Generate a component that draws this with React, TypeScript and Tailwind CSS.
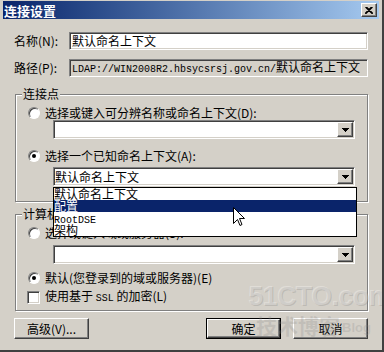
import React from 'react';

const sunken =
  'border border-t-[#808080] border-l-[#808080] border-b-white border-r-white shadow-[inset_1px_1px_0_#404040,inset_-1px_-1px_0_#d4d0c8]';
const raised =
  'border border-t-white border-l-white border-b-[#404040] border-r-[#404040] shadow-[inset_-1px_-1px_0_#808080,inset_1px_1px_0_#d4d0c8]';
const etched = 'border border-[#808080] shadow-[1px_1px_0_#fff,inset_1px_1px_0_#fff]';

function Arrow() {
  return (
    <svg width="7" height="4" viewBox="0 0 7 4">
      <rect x="0" y="0" width="7" height="1" fill="#000" />
      <rect x="1" y="1" width="5" height="1" fill="#000" />
      <rect x="2" y="2" width="3" height="1" fill="#000" />
      <rect x="3" y="3" width="1" height="1" fill="#000" />
    </svg>
  );
}

function Combo({ value, children }: { value?: string; children?: React.ReactNode }) {
  return (
    <div className={`relative ml-[37px] flex h-[19px] w-[302px] items-center bg-white ${sunken}`}>
      <span className="pl-[1px] leading-[12px]">{value}</span>
      <div className={`ml-auto mr-[1px] flex h-[15px] w-[16px] items-center justify-center bg-[#d4d0c8] ${raised}`}>
        <Arrow />
      </div>
      {children}
    </div>
  );
}

function Radio({ checked, label }: { checked?: boolean; label: string }) {
  return (
    <div className="ml-[12px] flex h-[12px] items-center">
      <div className="flex h-[12px] w-[12px] items-center justify-center rounded-full border border-t-[#808080] border-l-[#808080] border-b-white border-r-white bg-white shadow-[inset_1px_1px_0_#404040]">
        {checked && <div className="h-[4px] w-[4px] rounded-full bg-black" />}
      </div>
      <span className="ml-[5px] leading-[12px]">{label}</span>
    </div>
  );
}

function Button({ label, isDefault }: { label: string; isDefault?: boolean }) {
  const inner = (
    <div className={`flex h-full w-full items-center justify-center bg-[#d4d0c8] ${raised}`}>
      <span className="leading-[12px]">{label}</span>
    </div>
  );
  if (isDefault) {
    return <div className="h-[21px] w-[75px] border border-black">{inner}</div>;
  }
  return <div className="h-[21px] w-[75px]">{inner}</div>;
}

export default function App() {
  return (
    <div className="relative h-[352px] w-[384px] overflow-hidden border-r-2 border-b-2 border-[#404040] bg-[#d4d0c8] font-['Noto_Sans_CJK_SC',sans-serif] text-[12px] text-black">
      {/* title bar */}
      <div className="px-[3px] pt-[1px]">
        <div className="flex h-[18px] items-center bg-gradient-to-r from-[#0a246a] to-[#a6caf0] pl-[1px] pr-[2px]">
          <span className="text-[13px] font-bold leading-[13px] text-white">连接设置</span>
          <div className={`ml-auto flex h-[14px] w-[16px] items-center justify-center bg-[#d4d0c8] ${raised}`}>
            <svg width="8" height="7" viewBox="0 0 8 7">
              <path d="M0.5 0 L7.5 7 M1.5 0 L8 6.5 M7.5 0 L0.5 7 M6.5 0 L0 6.5" stroke="#000" strokeWidth="1.2" />
            </svg>
          </div>
        </div>
      </div>

      <div className="px-[14px]">
        <div className="mt-[13px] flex items-center">
          <span className="w-[55px] leading-[12px]">名称(N):</span>
          <div className={`flex h-[18px] flex-1 items-center bg-white pl-[2px] ${sunken}`}>
            <span className="leading-[12px]">默认命名上下文</span>
          </div>
        </div>
        <div className="mt-[9px] flex items-center">
          <span className="w-[55px] leading-[12px]">路径(P):</span>
          <div className={`flex h-[18px] flex-1 items-center bg-[#d4d0c8] pl-[2px] ${sunken}`}>
            <span className="whitespace-nowrap leading-[12px]">
              <span className="font-['Liberation_Mono',monospace] text-[10px]">LDAP://WIN2008R2.hbsycsrsj.gov.cn/</span>
              默认命名上下文
            </span>
          </div>
        </div>

        {/* 连接点 */}
        <div className={`relative ml-[1px] mt-[17px] h-[108px] ${etched}`}>
          <span className="absolute -top-[8px] left-[6px] bg-[#d4d0c8] px-[1px] leading-[14px]">连接点</span>
          <div className="mt-[12px]">
            <Radio label="选择或键入可分辨名称或命名上下文(D):" />
          </div>
          <div className="mt-[1px]">
            <Combo />
          </div>
          <div className="mt-[11px]">
            <Radio checked label="选择一个已知命名上下文(A):" />
          </div>
          <div className="mt-[5px]">
            <Combo value="默认命名上下文">
              <div className="absolute left-[-1px] top-[19px] z-20 flex h-[50px] w-[304px] flex-col border border-black bg-white">
                <div className="h-[12px] leading-[12px]">默认命名上下文</div>
                <div className="h-[12px] bg-[#0a246a] leading-[12px] text-white">配置</div>
                <div className="h-[12px] leading-[12px]">
                  <span className="font-['Liberation_Mono',monospace] text-[10px]">RootDSE</span>
                </div>
                <div className="h-[12px] leading-[12px]">架构</div>
              </div>
            </Combo>
          </div>
        </div>

        {/* 计算机 */}
        <div className={`relative ml-[1px] mt-[12px] h-[97px] ${etched}`}>
          <span className="absolute -top-[8px] left-[6px] bg-[#d4d0c8] px-[1px] leading-[14px]">计算机</span>
          <div className="mt-[12px]">
            <Radio label="选择或键入域或服务器(S):" />
          </div>
          <div className="mt-[6px]">
            <Combo />
          </div>
          <div className="mt-[8px]">
            <Radio checked label="默认(您登录到的域或服务器)(E)" />
          </div>
          <div className="ml-[11px] mt-[6px] flex items-center">
            <div className={`h-[13px] w-[13px] bg-white ${sunken}`} />
            <span className="ml-[5px] leading-[12px]">
              使用基于 <span className="font-['Liberation_Mono',monospace] text-[10px]">SSL</span> 的加密(L)
            </span>
          </div>
        </div>

        <div className="mt-[7px] flex items-center">
          <Button label="高级(V)..." />
          <div className="ml-auto flex gap-[12px]">
            <Button label="确定" isDefault />
            <Button label="取消" />
          </div>
        </div>
      </div>

      {/* watermark */}
      <div className="pointer-events-none absolute left-[248px] top-[283px] z-10 font-['Liberation_Sans',sans-serif] text-[27px] font-bold leading-[27px] tracking-tight text-white/30 [text-shadow:1px_1px_0_rgba(120,120,120,0.25)]">
        51CTO.com
      </div>
      <div className="pointer-events-none absolute left-[256px] top-[313px] z-10 flex items-end gap-[2px] text-[21px] font-bold leading-[24px] text-[#8a8a8a]/25">
        <span>技术博客</span>
        <span className="font-['Liberation_Sans',sans-serif] text-[13px] leading-[18px]">Blog</span>
      </div>

      {/* mouse cursor */}
      <svg className="pointer-events-none absolute left-[233px] top-[207px] z-30" width="13" height="21" viewBox="0 0 13 21">
        <path d="M0.5 0.5 V16.5 L4.5 12.5 L7 18.5 L9 17.5 L6.5 11.5 H11.5 Z" fill="#fff" stroke="#000" strokeWidth="1" />
      </svg>
    </div>
  );
}
